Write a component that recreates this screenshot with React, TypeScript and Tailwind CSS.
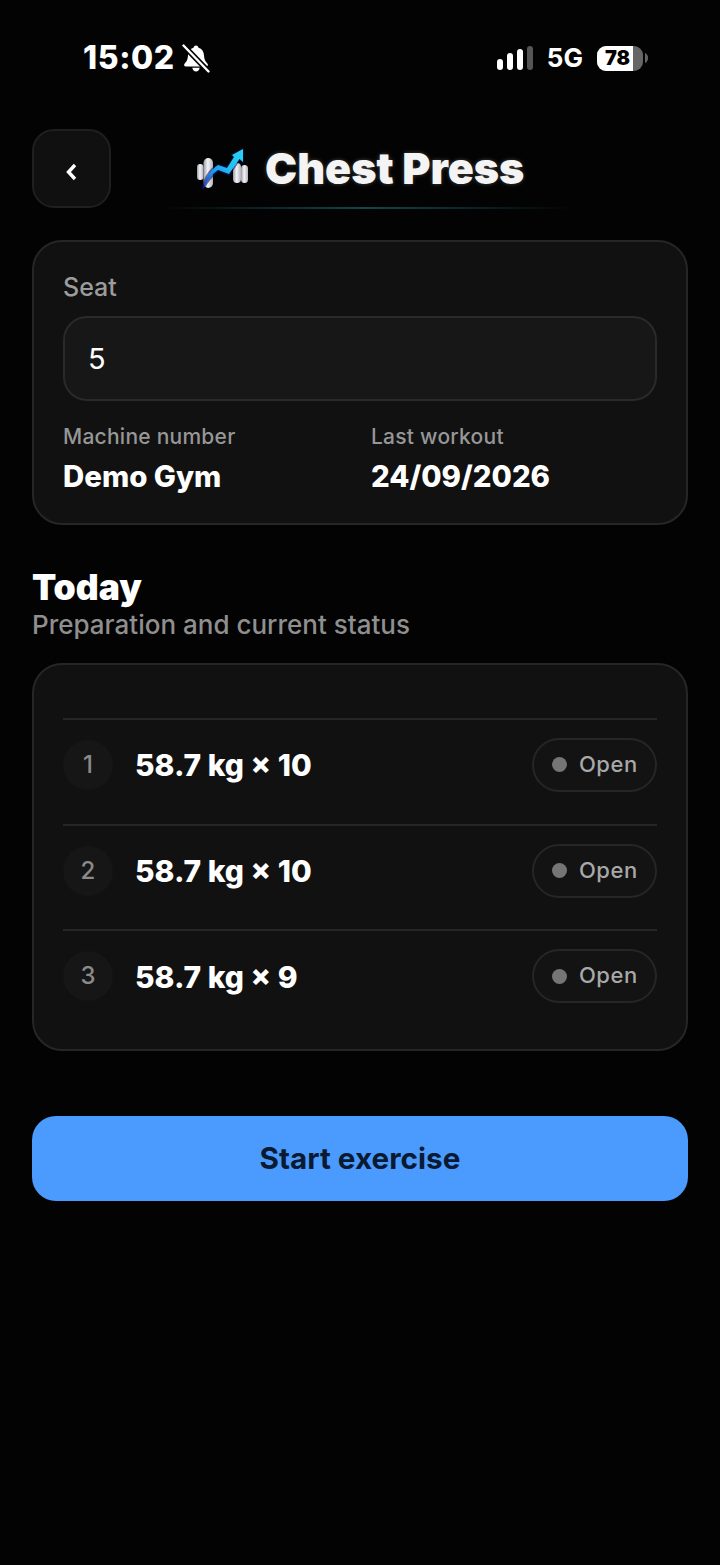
import React from "react";

const font = { fontFamily: "Inter, 'Liberation Sans', sans-serif" };

function Bell() {
  return (
    <svg width="28" height="29" viewBox="0 0 28 29" fill="none">
      <path d="M14 1.500c-1.500 0-2.400 1-2.500 2.300C8 4.800 6.200 7.700 6 11.200c-.2 3.800-1 6.100-3.300 8.300C1.500 20.800 2.200 22.500 3.800 22.500h20.400c1.600 0 2.300-1.700 1.100-3-2.300-2.200-3.100-4.500-3.300-8.300-.2-3.500-2-6.400-5.500-7.400C16.400 2.500 15.500 1.500 14 1.500z" fill="#fff" />
      <path d="M10.300 23.800c.3 2.100 1.800 3.700 3.700 3.700s3.400-1.600 3.700-3.700z" fill="#fff" />
      <path d="M1 1 27 28" stroke="#040404" strokeWidth="5.500" />
      <path d="M1.500 1.500 26.500 27.500" stroke="#fff" strokeWidth="2.400" strokeLinecap="round" />
    </svg>
  );
}

function Signal() {
  return (
    <div className="flex items-end gap-[4px] h-[24px]">
      <div className="w-[6px] h-[11px] rounded-full bg-white" />
      <div className="w-[6px] h-[17px] rounded-full bg-white" />
      <div className="w-[6px] h-[21px] rounded-full bg-white" />
      <div className="w-[6px] h-[24px] rounded-full bg-[#555]" />
    </div>
  );
}

function Battery() {
  return (
    <div className="flex items-center gap-[2px]">
      <div className="relative w-[46px] h-[25px] rounded-[9px] bg-[#666] overflow-hidden">
        <div className="absolute left-0 top-0 bottom-0 w-[36px] bg-white" />
        <div className="absolute inset-y-0 left-[8px] flex items-center text-[20px] font-black text-black leading-none">78</div>
      </div>
      <svg width="3" height="10" viewBox="0 0 3 10"><path d="M0 0c2 .8 3 2.700 3 5s-1 4.200-3 5z" fill="#666" /></svg>
    </div>
  );
}

function Logo() {
  return (
    <svg width="56" height="44" viewBox="0 0 56 44" fill="none" className="blur-[0.4px]">
      <defs>
        <linearGradient id="plate" x1="0" y1="0" x2="1" y2="0">
          <stop offset="0" stopColor="#9a9aa8" />
          <stop offset="0.45" stopColor="#f4f4f6" />
          <stop offset="1" stopColor="#b0b0bc" />
        </linearGradient>
        <linearGradient id="arrow" x1="0" y1="1" x2="1" y2="0">
          <stop offset="0" stopColor="#1230d8" />
          <stop offset="0.3" stopColor="#1a90f0" />
          <stop offset="0.6" stopColor="#22c0f0" />
          <stop offset="1" stopColor="#2ad4ee" />
        </linearGradient>
      </defs>
      <rect x="2" y="18" width="6.500" height="16" rx="3.250" fill="url(#plate)" />
      <rect x="8.500" y="12" width="9.500" height="30" rx="4.750" fill="url(#plate)" />
      <rect x="38" y="17" width="8" height="20" rx="4" fill="url(#plate)" />
      <rect x="46" y="19" width="7" height="18" rx="3.500" fill="url(#plate)" />
      <path d="M6.500 43 C8.500 32 13.500 23 23 17.500 L31.500 20 L38 11 L35 8.500 L49 2 L49 18 L45 14.500 L34.500 30 L23.500 26 C18 30 13 36 8.500 44 Z" fill="#08145c" fillOpacity="0.6" />
      <path d="M8 43 C10 33 15 24 23 19 L32 22 L39 11 L37 9 L48 3 L48 16 L44.500 13 L34 28 L23 24 C17 28 12 35 8 43 Z" fill="url(#arrow)" />
    </svg>
  );
}

function Field({ label, value }: { label: string; value: string }) {
  return (
    <div className="flex flex-col">
      <div className="text-[21px] leading-[26px] tracking-[0.25px] text-[#979797] font-medium">{label}</div>
      <div className="mt-[9px] text-[29.400px] leading-[36px] text-white font-extrabold">{value}</div>
    </div>
  );
}

function Row({ n, text }: { n: number; text: string }) {
  return (
    <div className="h-[105.700px] border-t-2 border-[#262626] flex items-center justify-between pb-[14px]">
      <div className="flex items-center">
        <div className="w-[50px] h-[50px] rounded-full bg-[#161616] flex items-center justify-center text-[24px] font-medium text-[#8a8a8a]">{n}</div>
        <div className="ml-[22px] mt-[2px] text-[30px] font-extrabold text-white">{text}</div>
      </div>
      <div className="w-[125px] h-[54px] rounded-full border-2 border-[#262626] bg-[#131313] flex items-center pl-[18px]">
        <div className="w-[15px] h-[15px] rounded-full bg-[#757575]" />
        <div className="ml-[12px] mb-[1px] text-[22px] font-medium tracking-[0.5px] text-[#a8a8a8]">Open</div>
      </div>
    </div>
  );
}

export default function App() {
  return (
    <div style={font} className="w-[720px] h-[1565px] bg-[#030303] overflow-hidden">
      <div className="h-[128px] pt-[38px] pl-[83px] pr-[72px]">
        <div className="flex items-center justify-between h-[40px]">
          <div className="flex items-center gap-[7px]">
            <span className="text-[32px] leading-none font-extrabold tracking-[0.6px] text-white">15:02</span>
            <Bell />
          </div>
          <div className="flex items-center gap-[14px]">
            <Signal />
            <span className="text-[26px] leading-none font-bold text-white">5G</span>
            <Battery />
          </div>
        </div>
      </div>

      <div className="mx-[32px] h-[80px] relative flex items-center">
        <div className="w-[79px] h-[79px] rounded-[22px] bg-[#101010] border-2 border-[#1f1f1f] flex items-center justify-center">
          <svg width="14" height="20" viewBox="0 0 14 20" fill="none" className="mt-[8px] mr-[2px]">
            <path d="M11 3 4.500 10l6.500 7" stroke="#fff" strokeWidth="3.400" strokeLinejoin="miter" />
          </svg>
        </div>
        <div className="ml-[84px] flex items-center gap-[14px]">
          <Logo />
          <span className="text-[43px] leading-none font-black text-[#f4f4f4] [text-shadow:0_0_4px_rgba(255,255,255,0.25)]">Chest Press</span>
        </div>
        <div className="absolute left-[130px] bottom-[-1px] w-[410px] h-[2px] bg-gradient-to-r from-transparent via-[#12464f] to-transparent" />
      </div>

      <div className="mx-[32px] mt-[32px] h-[285px] rounded-[30px] bg-[#111111] border-2 border-[#262626] px-[29px] pt-[30px]">
        <div className="text-[25px] leading-[30px] font-medium text-[#9c9c9c]">Seat</div>
        <div className="mt-[14px] h-[85px] rounded-[24px] bg-[#171717] border-2 border-[#2a2a2a] flex items-center pl-[23px] text-[29px] text-white">5</div>
        <div className="mt-[23px] grid grid-cols-[308px_1fr]">
          <Field label="Machine number" value="Demo Gym" />
          <Field label="Last workout" value="24/09/2026" />
        </div>
      </div>

      <div className="mx-[32px] mt-[43px]">
        <div className="text-[35.500px] leading-[40px] font-black text-white">Today</div>
        <div className="text-[26px] leading-[34px] font-medium text-[#8f8f8f]">Preparation and current status</div>
      </div>

      <div className="mx-[32px] mt-[21px] h-[388px] rounded-[30px] bg-[#111111] border-2 border-[#262626] px-[29px] pt-[53px]">
        <Row n={1} text="58.7 kg × 10" />
        <Row n={2} text="58.7 kg × 10" />
        <Row n={3} text="58.7 kg × 9" />
      </div>

      <div className="mx-[32px] mt-[65px] h-[85px] rounded-[24px] bg-[#4b9bff] flex items-center justify-center text-[29.700px] font-bold text-[#0a1a33]">
        Start exercise
      </div>
    </div>
  );
}
